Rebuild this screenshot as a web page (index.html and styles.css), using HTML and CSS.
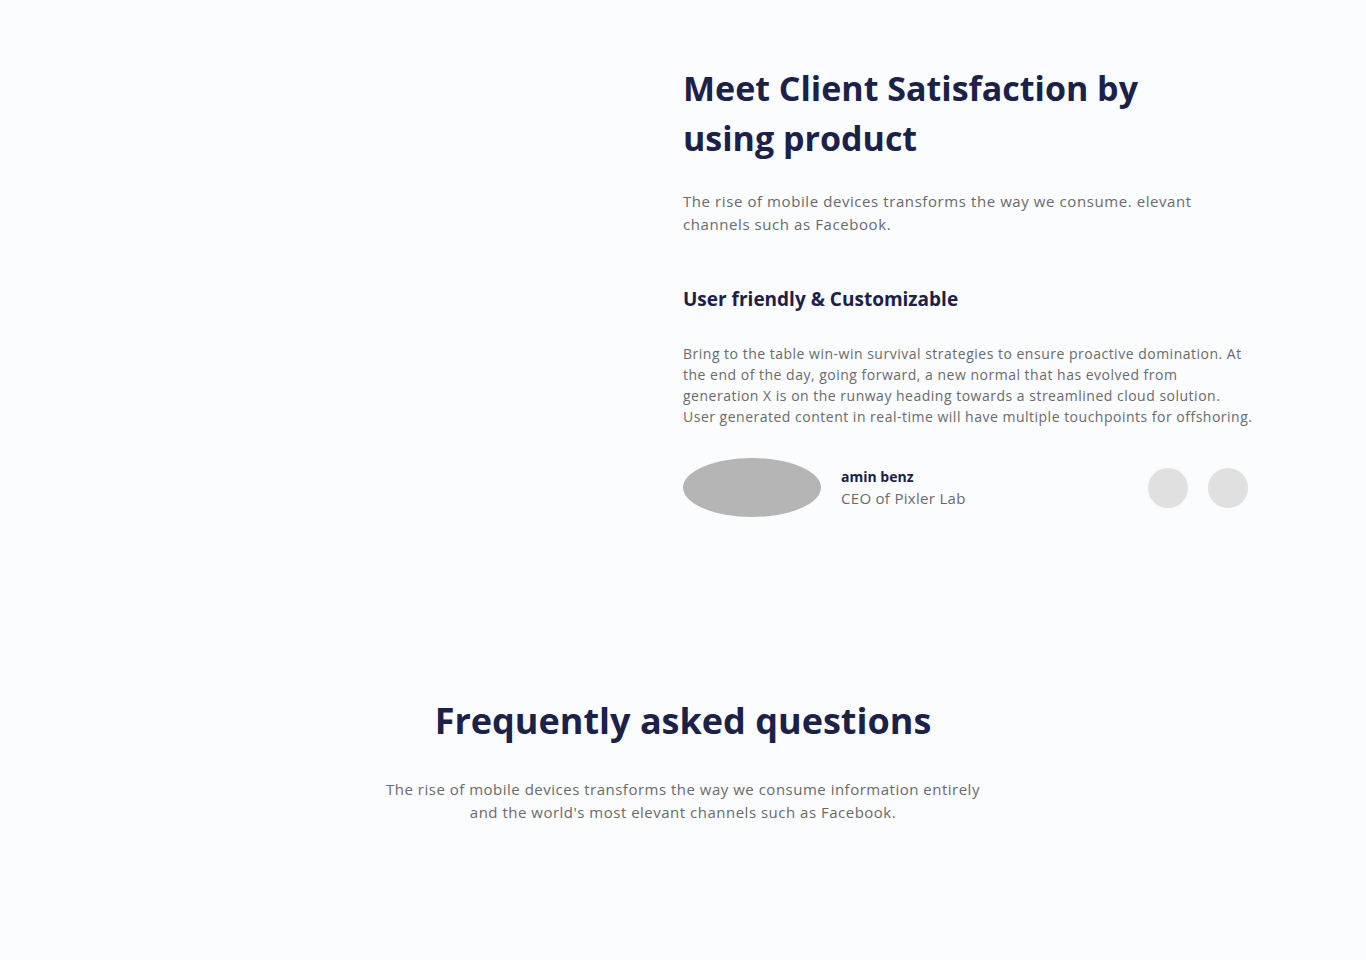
FILE: index.html
```html
<!DOCTYPE html>
<html lang="en">
<head>
<meta charset="utf-8">
<title>Client Satisfaction</title>
<link rel="stylesheet" href="styles.css">
</head>
<body>
<section class="about">
  <div class="container about-grid">
    <div class="about-media"></div>
    <div class="about-content">
      <h1 class="title">Meet Client Satisfaction by using product</h1>
      <p class="lead">The rise of mobile devices transforms the way we consume. elevant channels such as Facebook.</p>
      <h3 class="subtitle">User friendly &amp; Customizable</h3>
      <p class="body">Bring to the table win-win survival strategies to ensure proactive domination. At the end of the day, going forward, a new normal that has evolved from<br>generation X is on the runway heading towards a streamlined cloud solution.<br>User generated content in real-time will have multiple touchpoints for offshoring.</p>
      <div class="author">
        <div class="avatar"></div>
        <div class="author-info">
          <div class="author-name">amin benz</div>
          <div class="author-role">CEO of Pixler Lab</div>
        </div>
        <div class="nav">
          <span class="nav-dot"></span>
          <span class="nav-dot"></span>
        </div>
      </div>
    </div>
  </div>
</section>
<section class="faq">
  <h2 class="faq-title">Frequently asked questions</h2>
  <p class="faq-text">The rise of mobile devices transforms the way we consume information entirely and the world's most elevant channels such as Facebook.</p>
</section>
</body>
</html>
```

FILE: styles.css
```css
* { box-sizing: border-box; }
html, body {
  margin: 0;
  background: #fafcfd;
  font-family: "Open Sans", "Noto Sans", sans-serif;
}
.container {
  width: 1140px;
  margin: 0 auto;
}
.about {
  padding-top: 63px;
}
.about-grid {
  display: grid;
  grid-template-columns: 570px 570px;
}
.title {
  margin: 0;
  max-width: 480px;
  font-size: 34px;
  line-height: 50px;
  font-weight: 700;
  color: #1b2149;
}
.lead {
  margin: 27px 0 0;
  font-size: 15px;
  line-height: 23px;
  letter-spacing: 0.58px;
  color: #6a6a6a;
  padding-right: 20px;
}
.subtitle {
  margin: 50px 0 0;
  font-size: 19px;
  line-height: 27px;
  font-weight: 700;
  color: #1b2149;
}
.body {
  margin: 30px -6px 0 0;
  font-size: 14px;
  line-height: 21px;
  letter-spacing: 0.5px;
  color: #6a6a6a;
}
.author {
  margin-top: 31px;
  display: flex;
  align-items: center;
}
.avatar {
  width: 138px;
  height: 59px;
  border-radius: 50%;
  background: #b5b5b5;
}
.author-info {
  margin-left: 20px;
  display: flex;
  flex-direction: column;
}
.author-name {
  font-size: 14px;
  line-height: 20px;
  font-weight: 700;
  color: #1b2149;
}
.author-role {
  font-size: 15px;
  line-height: 22px;
  letter-spacing: 0.3px;
  color: #6a6a6a;
}
.nav {
  margin-left: auto;
  margin-right: 5px;
  display: flex;
  gap: 20px;
}
.nav-dot {
  width: 40px;
  height: 40px;
  border-radius: 50%;
  background: #e0e0e0;
}
.faq {
  padding-top: 179px;
  padding-bottom: 120px;
  text-align: center;
}
.faq-title {
  margin: 0;
  font-size: 36px;
  line-height: 50px;
  font-weight: 700;
  color: #1b2149;
}
.faq-text {
  margin: 32px auto 0;
  width: 610px;
  font-size: 15px;
  line-height: 23px;
  letter-spacing: 0.5px;
  color: #6a6a6a;
}
```
